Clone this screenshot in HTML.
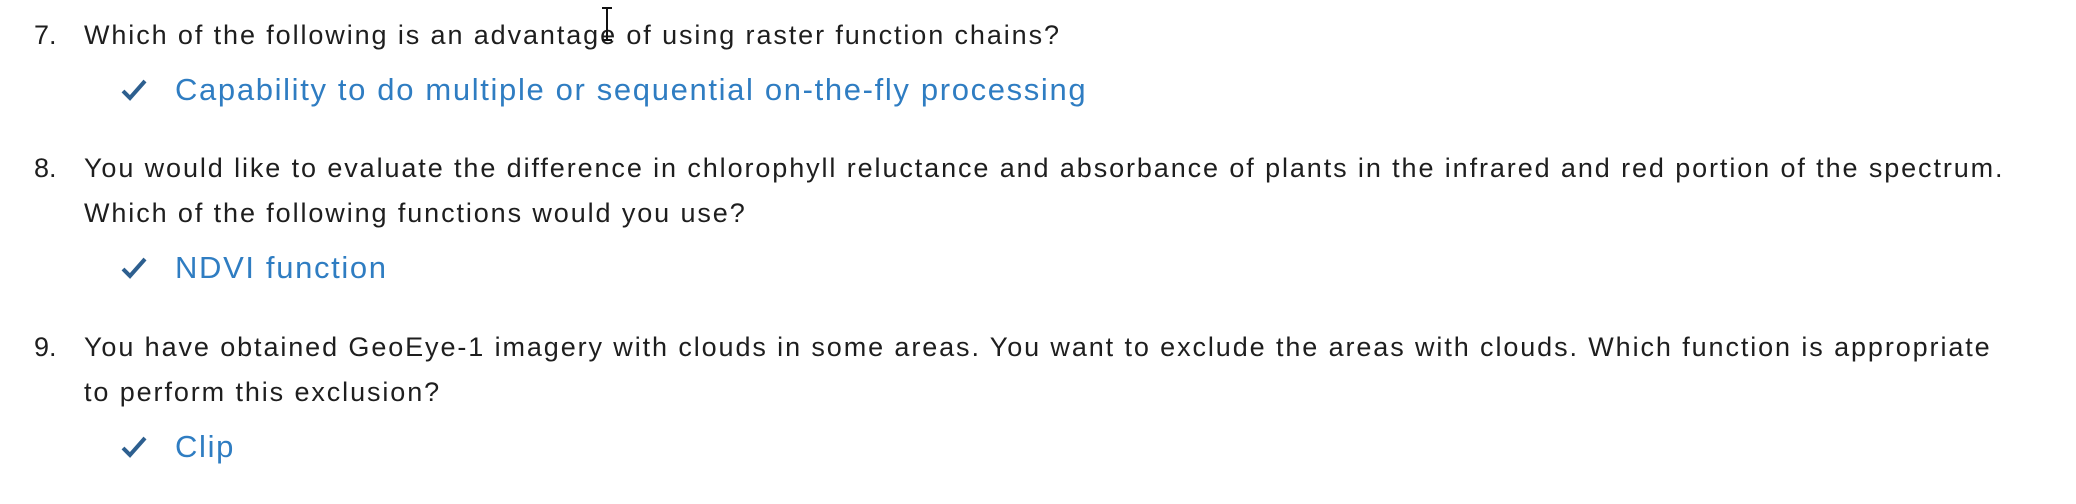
<!DOCTYPE html>
<html><head><meta charset="utf-8"><style>
body{margin:0;width:2076px;height:504px;background:#fff;font-family:"Liberation Sans",sans-serif;position:relative;overflow:hidden}
.q{position:absolute;left:84px;font-size:27px;letter-spacing:1.9px;color:#1e1e1e;white-space:nowrap}
.n{position:absolute;left:34px;font-size:27px;color:#1e1e1e}
.a{position:absolute;left:175px;font-size:31px;letter-spacing:1.65px;color:#2f7dc2;white-space:nowrap}
.c{position:absolute;left:119px;width:30px;height:26px}
</style></head><body>
<div class="n" style="top:20px">7.</div>
<div class="q" style="top:20px">Which of the following is an advantage of using raster function chains?</div>
<svg class="c" style="top:77px" viewBox="0 0 30 26"><path d="M4 14 L11 21 L26 4" fill="none" stroke="#2d5f8f" stroke-width="4"/></svg>
<div class="a" style="top:72px">Capability to do multiple or sequential on-the-fly processing</div>

<div class="n" style="top:153px">8.</div>
<div class="q" style="top:153px">You would like to evaluate the difference in chlorophyll reluctance and absorbance of plants in the infrared and red portion of the spectrum.</div>
<div class="q" style="top:198px">Which of the following functions would you use?</div>
<svg class="c" style="top:255px" viewBox="0 0 30 26"><path d="M4 14 L11 21 L26 4" fill="none" stroke="#2d5f8f" stroke-width="4"/></svg>
<div class="a" style="top:250px">NDVI function</div>

<div class="n" style="top:332px">9.</div>
<div class="q" style="top:332px">You have obtained GeoEye-1 imagery with clouds in some areas. You want to exclude the areas with clouds. Which function is appropriate</div>
<div class="q" style="top:377px">to perform this exclusion?</div>
<svg class="c" style="top:434px" viewBox="0 0 30 26"><path d="M4 14 L11 21 L26 4" fill="none" stroke="#2d5f8f" stroke-width="4"/></svg>
<div class="a" style="top:429px">Clip</div>

<svg style="position:absolute;left:600px;top:6px" width="14" height="36"><path d="M2 2H12M7 2V34M2 34H12" stroke="#111" stroke-width="2"/></svg>
</body></html>
